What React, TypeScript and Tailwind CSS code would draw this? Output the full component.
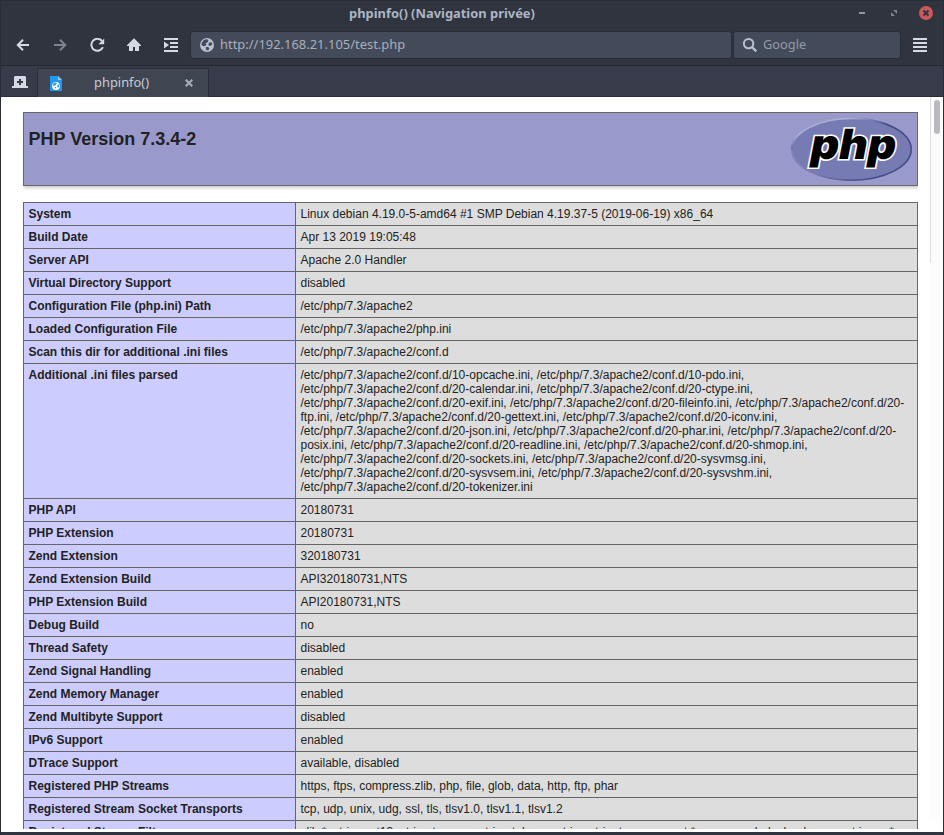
import React from 'react';

const rows: [string, string][] = [
  ['System', 'Linux debian 4.19.0-5-amd64 #1 SMP Debian 4.19.37-5 (2019-06-19) x86_64'],
  ['Build Date', 'Apr 13 2019 19:05:48'],
  ['Server API', 'Apache 2.0 Handler'],
  ['Virtual Directory Support', 'disabled'],
  ['Configuration File (php.ini) Path', '/etc/php/7.3/apache2'],
  ['Loaded Configuration File', '/etc/php/7.3/apache2/php.ini'],
  ['Scan this dir for additional .ini files', '/etc/php/7.3/apache2/conf.d'],
  [
    'Additional .ini files parsed',
    [
      '/etc/php/7.3/apache2/conf.d/10-opcache.ini, /etc/php/7.3/apache2/conf.d/10-pdo.ini,',
      '/etc/php/7.3/apache2/conf.d/20-calendar.ini, /etc/php/7.3/apache2/conf.d/20-ctype.ini,',
      '/etc/php/7.3/apache2/conf.d/20-exif.ini, /etc/php/7.3/apache2/conf.d/20-fileinfo.ini, /etc/php/7.3/apache2/conf.d/20-',
      'ftp.ini, /etc/php/7.3/apache2/conf.d/20-gettext.ini, /etc/php/7.3/apache2/conf.d/20-iconv.ini,',
      '/etc/php/7.3/apache2/conf.d/20-json.ini, /etc/php/7.3/apache2/conf.d/20-phar.ini, /etc/php/7.3/apache2/conf.d/20-',
      'posix.ini, /etc/php/7.3/apache2/conf.d/20-readline.ini, /etc/php/7.3/apache2/conf.d/20-shmop.ini,',
      '/etc/php/7.3/apache2/conf.d/20-sockets.ini, /etc/php/7.3/apache2/conf.d/20-sysvmsg.ini,',
      '/etc/php/7.3/apache2/conf.d/20-sysvsem.ini, /etc/php/7.3/apache2/conf.d/20-sysvshm.ini,',
      '/etc/php/7.3/apache2/conf.d/20-tokenizer.ini',
    ].join('\n'),
  ],
  ['PHP API', '20180731'],
  ['PHP Extension', '20180731'],
  ['Zend Extension', '320180731'],
  ['Zend Extension Build', 'API320180731,NTS'],
  ['PHP Extension Build', 'API20180731,NTS'],
  ['Debug Build', 'no'],
  ['Thread Safety', 'disabled'],
  ['Zend Signal Handling', 'enabled'],
  ['Zend Memory Manager', 'enabled'],
  ['Zend Multibyte Support', 'disabled'],
  ['IPv6 Support', 'enabled'],
  ['DTrace Support', 'available, disabled'],
  ['Registered PHP Streams', 'https, ftps, compress.zlib, php, file, glob, data, http, ftp, phar'],
  ['Registered Stream Socket Transports', 'tcp, udp, unix, udg, ssl, tls, tlsv1.0, tlsv1.1, tlsv1.2'],
  [
    'Registered Stream Filters',
    'zlib.*, string.rot13, string.toupper, string.tolower, string.strip_tags, convert.*, consumed, dechunk, convert.iconv.*',
  ],
];

function Globe({ className }: { className: string }) {
  return (
    <svg className={className} viewBox="0 0 14 14">
      <circle cx="7" cy="7" r="7" fill="currentColor" />
      <path d="M6 1.3 4 2 2 4.3 1.4 7 3 8 5 8.2 6.4 6.8 5.6 5.6 7.4 4.3 8.6 3 7.6 1.6zM9.3 4.6 8.2 6.8 9.6 8 11.2 7.6 12.4 6 11.5 4.2zM6.2 9 5.7 10.3 6.8 12.4 8.6 12 9.4 10.2 8 9z" className="fill-[#434a5a]" />
    </svg>
  );
}

function TitleBar() {
  return (
    <div className="relative flex h-[25px] items-center justify-center bg-[#2f343f]">
      <div className="-ml-[60px] text-[12.9px] font-bold leading-[25px] text-[#abb5c4]">phpinfo() (Navigation privée)</div>
      <div className="absolute right-[10px] top-[5px] flex h-[14px] items-center">
        <div className="mr-[26px] h-[2px] w-[6px] bg-[#9097a4]" />
        <svg className="mr-[22px] h-[6px] w-[6px] fill-[#7d8490]" viewBox="0 0 6 6">
          <path d="M2 0h4v4zM0 2v4h4z" />
        </svg>
        <svg className="h-[14px] w-[14px]" viewBox="0 0 14 14">
          <circle cx="7" cy="7" r="7" fill="#cc575d" />
          <path d="m4.5 4.5 5 5m0-5-5 5" stroke="#2f343f" strokeWidth="1.9" />
        </svg>
      </div>
    </div>
  );
}

function NavBar() {
  return (
    <div className="flex h-[39px] items-start bg-[#2f343f] pl-[15px] text-[#d3dae3]">
      <svg className="mt-3 h-[14px] w-[14px]" viewBox="0 0 14 14" fill="none" stroke="currentColor" strokeWidth="2">
        <path d="M13 7H2M7 1.8 1.8 7 7 12.2" />
      </svg>
      <svg className="ml-6 mt-3 h-[14px] w-[14px] text-[#7e848f]" viewBox="0 0 14 14" fill="none" stroke="currentColor" strokeWidth="2">
        <path d="M0 7h11M6 1.8 11.2 7 6 12.2" />
      </svg>
      <svg className="ml-[22px] mt-3 h-[15px] w-[15px]" viewBox="0 0 15 15">
        <path d="M12 3A6 6 0 1 0 12.9 9.2" fill="none" stroke="currentColor" strokeWidth="2" />
        <path d="M14.2.4v5.8H8.4z" fill="currentColor" />
      </svg>
      <svg className="ml-[21px] mt-3 h-[14px] w-[16px] fill-[#d3dae3]" viewBox="0 0 16 14">
        <path d="M7.7.5 1 7.3v.7h2v5h4V9h2v4h4V8h2v-.7L8.3.5z" />
      </svg>
      <svg className="ml-[22px] mt-3 h-[14px] w-[14px] fill-[#d3dae3]" viewBox="0 0 14 14">
        <path d="M0 0h14v2H0zM6 4h8v2H6zM6 8h8v2H6zM0 12h14v2H0zM0 3.5 5 7 0 10.5z" />
      </svg>
      <div className="ml-3 mt-[5px] flex h-7 w-[542px] items-center rounded-[3px] border border-[#292d37] bg-[#434a5a] pl-[9px]">
        <Globe className="h-[14px] w-[14px] text-[#b9c1cd]" />
        <span className="mb-0.5 ml-[6px] text-[12.95px] leading-6 text-[#a7afbb]">http://192.168.21.105/test.php</span>
      </div>
      <div className="ml-px mt-[5px] flex h-7 w-[168px] items-center rounded-[3px] border border-[#292d37] bg-[#434a5a] pl-2">
        <svg className="h-4 w-4" viewBox="0 0 16 16" fill="none" stroke="#b9c1cd" strokeWidth="2">
          <circle cx="6.6" cy="6.6" r="4.7" />
          <path d="m10 10 4.3 4.3" strokeWidth="2.4" />
        </svg>
        <span className="mb-0.5 ml-[5px] text-[12.8px] leading-6 text-[#949ba8]">Google</span>
      </div>
      <svg className="ml-3 mt-3 h-[14px] w-[14px] fill-[#d3dae3]" viewBox="0 0 14 14">
        <path d="M0 0h14v2H0zM0 4h14v2H0zM0 8h14v2H0zM0 12h14v2H0z" />
      </svg>
    </div>
  );
}

function TabStrip() {
  return (
    <div className="flex h-8 items-end border-b border-t border-b-[#2b2e39] border-t-[#22262f] bg-[#383c4a]">
      <div className="flex h-full w-9 items-start pl-[11px] pt-[10px]">
        <svg className="h-3 w-4" viewBox="0 0 16 12">
          <path d="M2 1 3 0h10l1 1v9h2v2H0v-2h2z" fill="#d3dae3" />
          <path d="M8 3v6M5 6h6" stroke="#383c4a" strokeWidth="2" />
        </svg>
      </div>
      <div className="-mb-px flex h-[29px] w-[172px] items-center border border-b-0 border-[#2b2e39] bg-[#404552] pl-3">
        <svg className="h-[15px] w-3" viewBox="0 0 12 15">
          <path d="M0 0h8l4 4v11H0z" fill="#2196f3" />
          <path d="M8 0v4h4z" fill="#90caf9" />
          <circle cx="6" cy="10" r="3.9" fill="#fff" />
          <path d="m3 8 2-1.4L7 7 5 9.8 3 9.5zM7.5 9l1.7-.8L9 11l-1.5.8zM4.7 11h1.5L6 13z" fill="#2196f3" />
        </svg>
        <span className="mb-0.5 ml-8 w-[59px] text-[12.9px] leading-6 text-[#c3cad5]">phpinfo()</span>
        <svg className="ml-8 h-2 w-2" viewBox="0 0 8 8">
          <path d="m.7.7 6.6 6.6m0-6.6L.7 7.3" stroke="#a7adb8" strokeWidth="2.1" />
        </svg>
      </div>
    </div>
  );
}

function PhpLogo() {
  return (
    <svg className="mr-[5px] mt-1 h-[66px] w-[122px]" viewBox="0 0 122 66">
      <defs>
        <linearGradient id="rim" x1="0.1" y1="0" x2="0.85" y2="0.6">
          <stop offset="0" stopColor="#9a9ecb" />
          <stop offset="0.3" stopColor="#aeb2d5" />
          <stop offset="0.5" stopColor="#777bb3" />
          <stop offset="0.7" stopColor="#484c89" />
          <stop offset="1" stopColor="#484c89" />
        </linearGradient>
        <linearGradient id="lowerRim" x1="0" y1="0" x2="1" y2="0">
          <stop offset="0" stopColor="#8488bd" />
          <stop offset="0.2" stopColor="#777bb3" />
          <stop offset="0.55" stopColor="#484c89" />
          <stop offset="1" stopColor="#484c89" />
        </linearGradient>
      </defs>
      <ellipse cx="61.5" cy="32.3" rx="60.5" ry="31.7" fill="#777bb3" />
      <path d="M1.8 32.3a59.7 30.9 0 0 1 119.4 0" fill="none" stroke="url(#rim)" strokeWidth="1.6" />
      <path d="M1.8 32.3a59.7 30.9 0 0 0 119.4 0" fill="none" stroke="url(#lowerRim)" strokeWidth="1.6" />
      <text
        x="18.5"
        y="0"
        transform="translate(0 42) skewX(-11)"
        textLength="85.5"
        lengthAdjust="spacingAndGlyphs"
        fontFamily="Inter"
        fontWeight="900"
        fontSize="41.5"
        className="fill-black stroke-white [paint-order:stroke]"
        strokeWidth="3.2"
        strokeLinejoin="miter"
      >
        php
      </text>
    </svg>
  );
}

export default function App() {
  return (
    <div className="flex h-[835px] w-[944px] flex-col overflow-hidden border-x border-t border-[#292d38] bg-[#2f343f] font-['Noto_Sans',sans-serif]">
      <TitleBar />
      <NavBar />
      <TabStrip />
      <div className="flex h-[735px] shrink-0 items-start overflow-hidden bg-white">
        <div className="ml-[22px] h-[732px] w-[895px] shrink-0 overflow-hidden pt-[15px] font-['Liberation_Sans',Arial,sans-serif] text-[#222]">
          <div className="flex h-[74px] items-start justify-between border border-[#666] bg-[#9999cc] shadow-[1px_2px_3px_#ccc]">
            <h1 className="ml-[4.5px] mt-[15px] text-[18px] font-bold leading-[22px]">PHP Version 7.3.4-2</h1>
            <PhpLogo />
          </div>
          <div className="mt-4 border border-[#666] text-[12px] leading-[14px]">
            {rows.map(([name, value]) => (
              <div key={name} className="flex border-b border-[#666]">
                <div className="w-[272px] shrink-0 border-r border-[#666] bg-[#ccccff] p-1 pl-[4.5px] font-bold">{name}</div>
                <div className="grow whitespace-pre bg-[#ddd] p-1 pl-[4.5px]">{value}</div>
              </div>
            ))}
          </div>
        </div>
        <div className="ml-3 flex h-[722px] w-[13px] shrink-0 bg-[#fcfcfc]">
          <div className="h-[166px] w-px bg-[#dcdce4]" />
          <div className="ml-[3px] mt-[3px] h-[34px] w-[6px] rounded-full bg-[#b8babf]" />
        </div>
      </div>
    </div>
  );
}
